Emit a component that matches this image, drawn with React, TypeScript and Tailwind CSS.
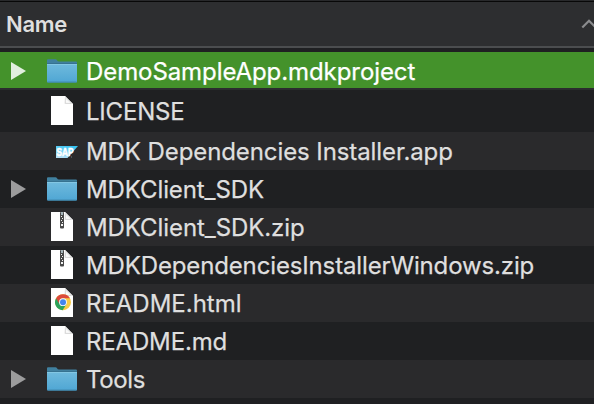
type Kind = "folder" | "file" | "zip" | "chrome" | "sap";

interface Entry {
  name: string;
  kind: Kind;
  row: string;
  text: string;
}

const entries: Entry[] = [
  { name: "DemoSampleApp.mdkproject", kind: "folder", row: "h-9 bg-[#44922b] pt-0.5 text-white", text: "tracking-[-0.08px]" },
  { name: "LICENSE", kind: "file", row: "h-[44px] border-t-2 border-[#2b2c2e] bg-[#1f2022]", text: "tracking-[-0.2px]" },
  { name: "MDK Dependencies Installer.app", kind: "sap", row: "h-[38px] bg-[#2a2a2c]", text: "tracking-[-0.09px]" },
  { name: "MDKClient_SDK", kind: "folder", row: "h-[38px] bg-[#1f2022]", text: "tracking-[-0.1px]" },
  { name: "MDKClient_SDK.zip", kind: "zip", row: "h-[38px] bg-[#2a2a2c]", text: "tracking-[-0.08px]" },
  { name: "MDKDependenciesInstallerWindows.zip", kind: "zip", row: "h-[38px] bg-[#1f2022]", text: "tracking-[-0.14px]" },
  { name: "README.html", kind: "chrome", row: "h-[38px] bg-[#2a2a2c]", text: "tracking-[-0.02px]" },
  { name: "README.md", kind: "file", row: "h-[38px] bg-[#1f2022]", text: "tracking-[-0.16px]" },
  { name: "Tools", kind: "folder", row: "h-[38px] bg-[#2a2a2c]", text: "tracking-[-0.35px]" },
];

function Folder() {
  return (
    <svg width="30" height="24" viewBox="0 0 30 24" className="block">
      <defs>
        <linearGradient id="folderFront" x1="0" y1="0" x2="0" y2="1">
          <stop offset="0" stopColor="#6fbadd" />
          <stop offset="0.5" stopColor="#5fb0d8" />
          <stop offset="1" stopColor="#4fa6d4" />
        </linearGradient>
      </defs>
      <path d="M0 3V1.3Q0 .3 1 .3H8.5Q9.5 .3 10 1.3Q10.6 2.6 12 2.6H29Q30 2.6 30 3.6V10H0Z" fill="#40809f" />
      <rect y="4.2" width="30" height="1" fill="#356f8d" />
      <path d="M0 5H30V22.6Q30 23.6 29 23.6H1Q0 23.6 0 22.6Z" fill="url(#folderFront)" />
      <rect y="5" width="30" height="1" fill="#83c7e3" />
      <rect x=".5" y="22.6" width="29" height="1" fill="#3f86a9" />
    </svg>
  );
}

function Zipper() {
  return (
    <g>
      <rect x="9" y="0" width="4" height="16.5" rx="1" fill="#4a4a4a" />
      <rect x="10" y="0" width="2" height="3" fill="#a5b5ba" />
      <path d="M10 4h1v1h-1zM11 6h1v1h-1zM10 8h1v1h-1zM11 10h1v1h-1zM10 12h2v2h-2z" fill="#f4f4f4" />
    </g>
  );
}

function Chrome() {
  return (
    <g>
      <circle cx="12" cy="14.2" r="8" fill="#f9cb45" />
      <path d="M12 14.2 5.07 10.2A8 8 0 0 0 11.6 22.2L15.46 16.2Z" fill="#2ba25b" />
      <path d="M5.07 10.2A8 8 0 0 1 18.93 10.2H12A4 4 0 0 0 8.54 16.2Z" fill="#dc4a3c" />
      <circle cx="12" cy="14.2" r="3.9" fill="#f3f5f7" />
      <circle cx="12" cy="14.2" r="3" fill="#4285ee" />
    </g>
  );
}

function Document({ kind }: { kind: Kind }) {
  return (
    <svg width="22" height="29" viewBox="0 0 22 29" className="block">
      <path d="M0 0H14L22 8V29H0Z" fill="#fff" />
      <path d="M14 0 22 8H13.6Z" fill="#e6e6e6" />
      <path d="M14.4 2.4V7.4H20" fill="#fbfbfb" stroke="#cfcfcf" strokeWidth=".7" />
      {kind === "zip" && <Zipper />}
      {kind === "chrome" && <Chrome />}
    </svg>
  );
}

function SapLogo() {
  return (
    <svg width="22" height="12" viewBox="0 0 22 12" className="block">
      <defs>
        <linearGradient id="sapBlue" x1="0.7" y1="0" x2="0.3" y2="1">
          <stop offset="0" stopColor="#35c3f2" />
          <stop offset="1" stopColor="#b4e0f7" />
        </linearGradient>
      </defs>
      <path d="M0 0H22L11.5 12H0Z" fill="url(#sapBlue)" />
      <text x=".4" y="9.7" textLength="17" lengthAdjust="spacingAndGlyphs" fontFamily="Liberation Sans, sans-serif" fontWeight="700" fontSize="10.8" fill="#fff" stroke="#fff" strokeWidth=".5">
        SAP
      </text>
      <rect x="15" y="10.5" width="1" height="1" fill="#6c7f88" />
    </svg>
  );
}

function EntryIcon({ kind }: { kind: Kind }) {
  if (kind === "folder") return <Folder />;
  if (kind === "sap") return <div className="pt-0.5 pl-[9px]"><SapLogo /></div>;
  return <div className="pb-px pl-1"><Document kind={kind} /></div>;
}

export default function App() {
  return (
    <div className="h-[404px] w-[594px] overflow-hidden bg-[#1f2022] font-['Inter',sans-serif] text-2xl text-[#dfdfdf]">
      <header className="flex h-12 items-center justify-between border-t border-b-2 border-t-[#28292b] border-b-[#4b4d4f] bg-[#2d2e30] shadow-[inset_0_1px_0_#080808]">
        <span className="pt-0.5 pl-1.5 text-[22px] font-semibold tracking-[-0.3px]">Name</span>
        <svg width="13" height="10" viewBox="0 0 13 10" className="mt-px block" fill="none" stroke="#8b8c8e" strokeWidth="2.2">
          <path d="M1.3 8.5 8 1.8 14.7 8.5" />
        </svg>
      </header>
      <ul className="pt-1">
        {entries.map((entry) => (
          <li key={entry.name} className={`flex items-center ${entry.row}`}>
            <div className="w-[47px] shrink-0 pl-[11px]">
              {entry.kind === "folder" && (
                <svg width="15" height="18" viewBox="0 0 15 18" className="block">
                  <path d="M0 0 15 9 0 18Z" fill={entry.name.startsWith("Demo") ? "#e2efdf" : "#9c9c9d"} />
                </svg>
              )}
            </div>
            <div className="w-[39px] shrink-0">
              <EntryIcon kind={entry.kind} />
            </div>
            <span className={`whitespace-nowrap pt-0.5 leading-9 [-webkit-text-stroke:0.25px] ${entry.text}`}>{entry.name}</span>
          </li>
        ))}
      </ul>
    </div>
  );
}
